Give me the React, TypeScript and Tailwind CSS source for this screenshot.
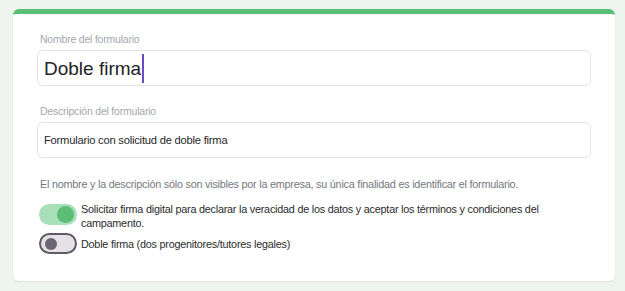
import { useState } from "react";

function Toggle({ on, onClick }: { on: boolean; onClick: () => void }) {
  if (on) {
    return (
      <button
        onClick={onClick}
        className="mt-[2px] flex h-[21px] w-[38px] shrink-0 items-center justify-end rounded-full bg-[#a6dfb8] pr-[3px]"
      >
        <span className="h-[17px] w-[17px] rounded-full bg-[#5cbd76]" />
      </button>
    );
  }
  return (
    <button
      onClick={onClick}
      className="flex h-[21px] w-[38px] shrink-0 items-center rounded-full border-2 border-[#5f5a64] bg-[#e6e1e7] pl-[4px]"
    >
      <span className="h-[12px] w-[12px] rounded-full bg-[#6a6570]" />
    </button>
  );
}

export default function App() {
  const [signature, setSignature] = useState(true);
  const [double, setDouble] = useState(false);

  return (
    <div
      className="min-h-[291px] w-full bg-[#edf5ee] pt-[9px] pr-[10px] pb-[10px] pl-[13px]"
      style={{ fontFamily: "'Liberation Sans', Arial, sans-serif" }}
    >
      <div className="h-[272px] rounded-[6px] border-t-[5px] border-[#5bbe77] bg-white px-[24px] pt-[18px] shadow-[0_1px_2px_rgba(0,0,0,0.08)]">
        {/* Form name */}
        <label className="ml-[3px] block text-[10.5px] leading-[14px] tracking-[-0.02em] text-[#a3a8ad]">
          Nombre del formulario
        </label>
        <div className="mt-[4px] flex h-[36px] items-center rounded-[5px] border border-[#e2e4e6] px-[6px]">
          <span className="text-[19px] leading-none text-[#222326]">Doble firma</span>
          <span className="ml-[1px] h-[29px] w-[2px] bg-[#6a4bc4]" />
        </div>

        {/* Description */}
        <label className="mt-[18px] ml-[3px] block text-[10.5px] leading-[14px] tracking-[-0.02em] text-[#a3a8ad]">
          Descripción del formulario
        </label>
        <div className="mt-[4px] flex h-[36px] items-center rounded-[5px] border border-[#e2e4e6] px-[6px]">
          <span className="text-[11.2px] tracking-[-0.02em] text-[#26272a]">
            Formulario con solicitud de doble firma
          </span>
        </div>

        <p className="mt-[19px] ml-[3px] text-[10.8px] leading-[14px] tracking-[-0.02em] text-[#74787d]">
          El nombre y la descripción sólo son visibles por la empresa, su única finalidad es identificar el formulario.
        </p>

        {/* Toggles */}
        <div className="mt-[11px] ml-[2px] flex flex-col gap-[3px]">
          <div className="flex items-start gap-[4px]">
            <Toggle on={signature} onClick={() => setSignature(!signature)} />
            <span className="text-[10.8px] leading-[14px] tracking-[-0.02em] text-[#2a2b2e]">
              Solicitar firma digital para declarar la veracidad de los datos y aceptar los términos y condiciones del campamento.
            </span>
          </div>
          <div className="flex items-center gap-[4px]">
            <Toggle on={double} onClick={() => setDouble(!double)} />
            <span className="text-[10.8px] leading-[14px] tracking-[-0.02em] text-[#2a2b2e]">
              Doble firma (dos progenitores/tutores legales)
            </span>
          </div>
        </div>
      </div>
    </div>
  );
}
